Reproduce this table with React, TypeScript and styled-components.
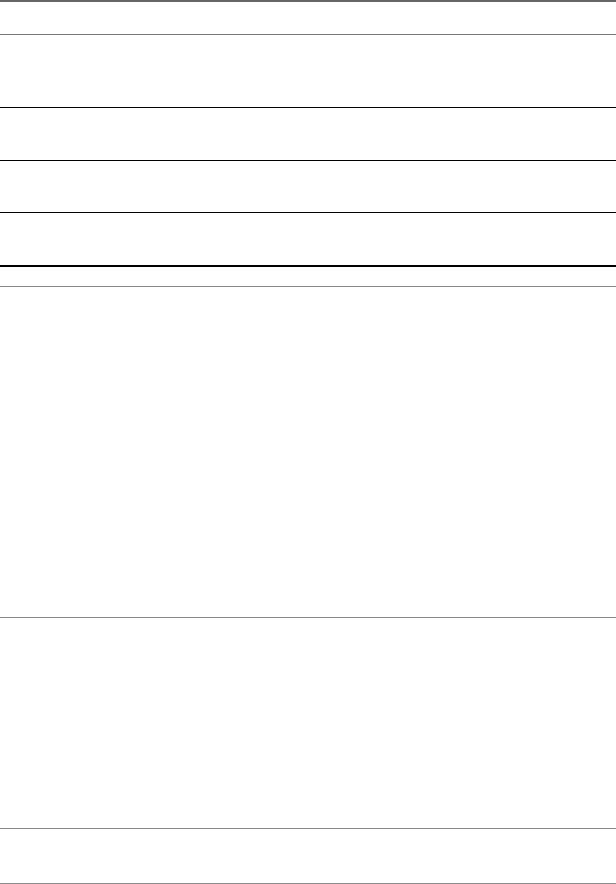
import styled, { createGlobalStyle } from 'styled-components';

const GlobalStyle = createGlobalStyle`
    html, body {
        margin: 0;
        padding: 0;
        background: #ffffff;
        font-family: "Liberation Sans", Arial, sans-serif;
    }
`;

const Page = styled.div`
    display: flex;
    flex-direction: column;
    width: 616px;
    height: 884px;
    overflow: hidden;
`;

const Table = styled.div`
    display: flex;
    flex-direction: column;
    border-top: 2px solid #666666;
`;

const Row = styled.div<{ $h: number; $line: string; $weight?: number }>`
    display: grid;
    grid-template-columns: 264px 1fr;
    height: ${(p) => p.$h}px;
    border-bottom: ${(p) => p.$weight || 1}px solid ${(p) => p.$line};
`;

const Cell = styled.div`
    display: flex;
    align-items: center;
    padding: 0 8px;
    font-size: 14px;
    color: #222222;
`;

const Section = styled.div`
    display: flex;
    flex-direction: column;
`;

const rows = [
    { h: 32, line: '#777777' },
    { h: 72, line: '#000000' },
    { h: 52, line: '#000000' },
    { h: 51, line: '#000000' },
    { h: 52, line: '#000000', weight: 2 },
];

const lower = [19, 330, 210, 54];

function App() {
    return (
        <Page>
            <GlobalStyle />
            <Table>
                {rows.map((r, i) => (
                    <Row key={i} $h={r.h} $line={r.line} $weight={r.weight}>
                        <Cell />
                        <Cell />
                    </Row>
                ))}
            </Table>
            <Section>
                {lower.map((h, i) => (
                    <Row key={i} $h={h} $line="#888888">
                        <Cell />
                        <Cell />
                    </Row>
                ))}
            </Section>
        </Page>
    );
}

export default App;
